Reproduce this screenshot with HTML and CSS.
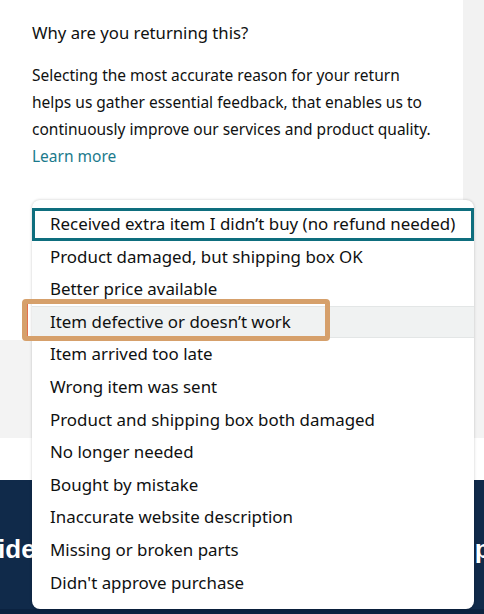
FILE: index.html
```html
<!DOCTYPE html>
<html lang="en">

<head>
  <meta charset="UTF-8" />
  <title>Return reason</title>
  <link rel="stylesheet" href="styles.css">
</head>

<body>

  <div class="top">
    <div class="panel">
      <h2 class="question">Why are you returning this?</h2>
      <p class="info">
        Selecting the most accurate reason for your return<br>
        helps us gather essential feedback, that enables us to<br>
        continuously improve our services and product quality.<br>
        <a href="#" class="learn">Learn more</a>
      </p>
    </div>
    <div class="aside"></div>
  </div>

  <div class="band"></div>
  <div class="spacer"></div>

  <div class="footer">
    <div class="footer-title">
      <span>Guide</span>
      <span>policy</span>
    </div>
  </div>

  <ul class="reason-list">
    <li class="reason selected">Received extra item I didn’t buy (no refund needed)</li>
    <li class="reason">Product damaged, but shipping box OK</li>
    <li class="reason">Better price available</li>
    <li class="reason hover">Item defective or doesn’t work</li>
    <li class="reason">Item arrived too late</li>
    <li class="reason">Wrong item was sent</li>
    <li class="reason">Product and shipping box both damaged</li>
    <li class="reason">No longer needed</li>
    <li class="reason">Bought by mistake</li>
    <li class="reason">Inaccurate website description</li>
    <li class="reason">Missing or broken parts</li>
    <li class="reason">Didn't approve purchase</li>
  </ul>

  <div class="callout"></div>

</body>

</html>
```

FILE: styles.css
```css
body {
  font-family: 'Noto Sans', 'Liberation Sans', sans-serif;
  color: #0f1111;
  margin: 0;
  background: #fff;
  overflow: hidden;
}

.top {
  display: flex;
  height: 340px;
}

.panel {
  width: 463px;
  background: #fff;
  padding: 21px 0 0 32px;
  box-sizing: border-box;
}

.aside {
  flex: 1;
  background: #f2f2f2;
}

.question {
  font-size: 16.7px;
  font-weight: normal;
  line-height: 24px;
  margin: 0;
}

.info {
  font-size: 15.5px;
  line-height: 27px;
  margin: 17px 0 0;
}

.learn {
  color: #1b7a8c;
  text-decoration: none;
}

.band {
  height: 98px;
  background: #f3f3f3;
}

.spacer {
  height: 42px;
  background: #fff;
}

.footer {
  height: 134px;
  background: #102a4a;
  border-bottom: 5px solid #0b2240;
  box-sizing: border-box;
  overflow: hidden;
}

.footer-title {
  display: flex;
  justify-content: space-between;
  margin: 54px -66px 0 -38px;
  font-family: 'Liberation Sans', sans-serif;
  font-size: 26px;
  font-weight: bold;
  color: #fff;
  line-height: 30px;
}

.reason-list {
  position: absolute;
  left: 32px;
  top: 200px;
  width: 442px;
  height: 409px;
  box-sizing: border-box;
  margin: 0;
  padding: 8px 0;
  list-style: none;
  background: #fff;
  border-radius: 8px;
  box-shadow: 0 0 3px rgba(0, 0, 0, 0.22);
}

.reason {
  height: 32.6px;
  line-height: 32.6px;
  padding-left: 18px;
  font-size: 16.9px;
  white-space: nowrap;
  box-sizing: border-box;
}

.reason.selected {
  border: 3px solid #0e6e7e;
  line-height: 26px;
  padding-left: 15px;
}

.reason.hover {
  background: #f0f2f2;
  border-top: 1px solid #e3e6e6;
  border-bottom: 1px solid #e3e6e6;
  line-height: 30.6px;
}

.callout {
  position: absolute;
  left: 22px;
  top: 299px;
  width: 308px;
  height: 42px;
  box-sizing: border-box;
  border: 5px solid #d6a06b;
  border-radius: 4px;
  box-shadow: inset 1px 0 0 #e2704e;
}
```
